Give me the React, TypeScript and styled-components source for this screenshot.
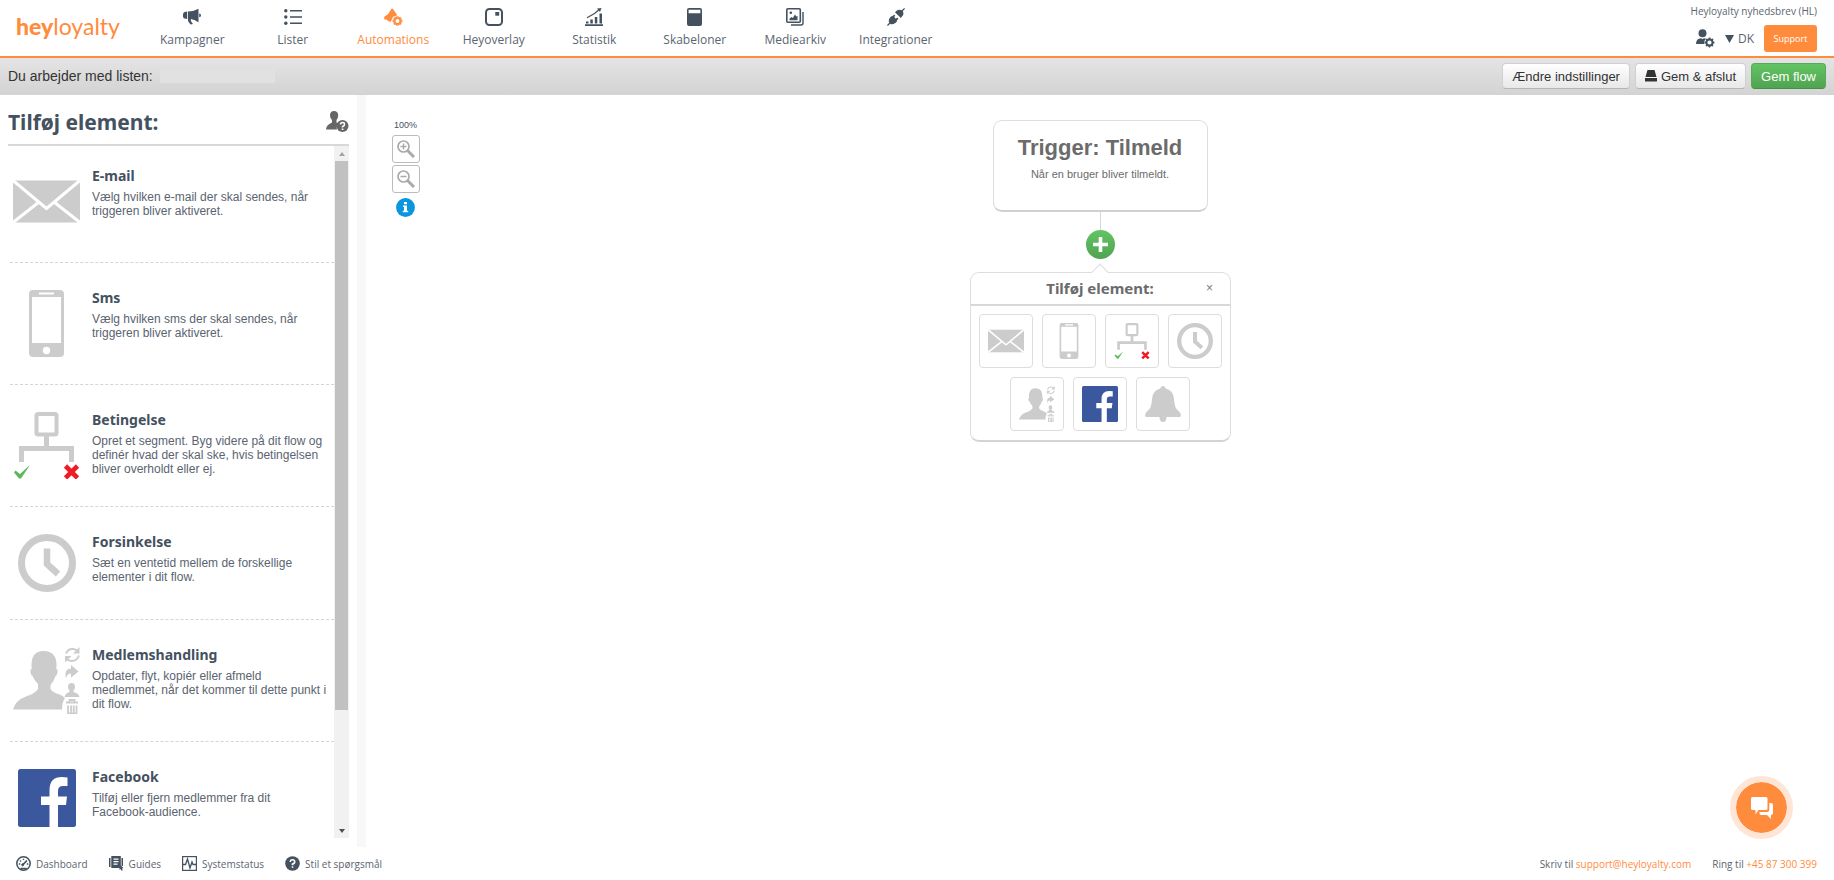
import React from "react";
import styled, { createGlobalStyle, css } from "styled-components";

const ORANGE = "#ff8b3d";
const SLATE = "#44515f";
const GREY = "#cccccc";
const UI = `"Open Sans", "Noto Sans", sans-serif`;
const HEADING = `"Noto Sans", "Open Sans", sans-serif`;
const BODY = `"Liberation Sans", Arial, sans-serif`;

const GlobalStyle = createGlobalStyle`
  *, *::before, *::after { box-sizing: border-box; }
  body { margin: 0; background: #fff; color: ${SLATE}; font-family: ${BODY}; }
  h1, h2, h3, p, ul { margin: 0; padding: 0; }
  ul { list-style: none; }
  a { color: inherit; text-decoration: none; }
  button { font-family: inherit; cursor: pointer; margin: 0; }
  svg { display: block; flex: none; }
`;

const Page = styled.div`
  height: 100vh;
  display: flex;
  flex-direction: column;
  overflow: hidden;
`;

const TopBar = styled.header`
  flex: none;
  height: 58px;
  display: flex;
  justify-content: space-between;
  padding: 0 17px 0 0;
  border-bottom: 2px solid ${ORANGE};
  font-family: ${UI};
`;

const TopLeft = styled.div`
  display: flex;
`;

const Logo = styled.a`
  width: 142px;
  padding: 9px 0 0 16px;
  font-family: Lato, sans-serif;
  font-size: 23px;
  line-height: 34px;
  color: ${ORANGE};
  b { font-weight: 900; }
`;

const Nav = styled.nav`
  width: 804px;
  display: grid;
  grid-template-columns: repeat(8, 1fr);
`;

const NavLink = styled.a<{ $active?: boolean }>`
  display: flex;
  flex-direction: column;
  align-items: center;
  gap: 5px;
  padding-top: 8px;
  font-size: 12px;
  line-height: 18px;
  color: ${(p) => (p.$active ? ORANGE : "#5b6570")};
  svg { color: ${(p) => (p.$active ? ORANGE : SLATE)}; }
`;

const Account = styled.div`
  display: flex;
  flex-direction: column;
  align-items: flex-end;
  gap: 6px;
  padding-top: 3px;
  color: #5b6570;
`;

const AccountName = styled.span`
  font-size: 10px;
  line-height: 16px;
`;

const AccountTools = styled.div`
  display: flex;
  align-items: center;
`;

const PlainButton = styled.button`
  display: flex;
  align-items: center;
  gap: 4px;
  border: 0;
  padding: 0;
  background: none;
  color: inherit;
  font-size: 12px;
  margin-right: 10px;
`;

const SupportButton = styled.button`
  width: 53px;
  height: 27px;
  padding: 0;
  border: 0;
  border-radius: 3px;
  background: ${ORANGE};
  color: #fff;
  font-size: 9px;
`;

const ListBar = styled.div`
  flex: none;
  height: 37px;
  display: flex;
  align-items: center;
  justify-content: space-between;
  padding: 0 8px 1px;
  background: linear-gradient(#e4e4e4, #d3d3d3);
  font-size: 14px;
  color: #333;
`;

const ListName = styled.div`
  display: flex;
  align-items: center;
  gap: 7px;
`;

const Redacted = styled.span`
  width: 115px;
  height: 13px;
  background: #e1e1e1;
`;

const Actions = styled.div`
  display: flex;
  gap: 5px;
`;

const ActionButton = styled.button<{ $primary?: boolean }>`
  display: flex;
  align-items: center;
  gap: 4px;
  height: 26px;
  padding: 0 9px;
  border: 1px solid #d0d0d0;
  border-bottom-color: #b5b5b5;
  border-radius: 4px;
  background: linear-gradient(#fff, #e8e8e8);
  color: #333;
  font-size: 13px;
  ${(p) =>
    p.$primary &&
    css`
      border-color: #56ab56;
      border-bottom-color: #449044;
      background: linear-gradient(#62c462, #51a351);
      color: #fff;
    `}
`;

const Workspace = styled.div`
  flex: 1;
  min-height: 0;
  display: flex;
`;

const Sidebar = styled.aside`
  flex: none;
  width: 366px;
  display: flex;
  flex-direction: column;
  padding: 0 9px 9px 8px;
  border-right: 9px solid #f8f8f8;
`;

const SidebarHead = styled.div`
  flex: none;
  height: 51px;
  width: 341px;
  display: flex;
  align-items: center;
  justify-content: space-between;
  padding-top: 4px;
  border-bottom: 2px solid #d8d8d8;
  h1 {
    font: 700 21px/28px ${HEADING};
  }
`;

const ScrollArea = styled.div`
  flex: 1;
  min-height: 0;
  width: 341px;
  display: flex;
`;

const ElementList = styled.ul`
  flex: 1;
  overflow: hidden;
  padding-left: 2px;
`;

const ElementItem = styled.li`
  display: flex;
  gap: 12px;
  padding: 27px 5px 27px 3px;
  border-bottom: 1px dashed #d5d5d5;
  &:first-child { padding-top: 22px; }
`;

const IconCell = styled.div`
  flex: none;
  width: 67px;
  display: flex;
  align-items: center;
  justify-content: center;
`;

const ElementText = styled.div`
  h2 {
    font: 700 14px/16px ${HEADING};
    padding-bottom: 6px;
  }
  p {
    font-size: 12px;
    line-height: 14px;
    color: #5a6470;
  }
`;

const ScrollBar = styled.div`
  width: 15px;
  display: flex;
  flex-direction: column;
  align-items: center;
  background: #f1f1f1;
`;

const ScrollArrow = styled.div<{ $down?: boolean }>`
  height: 15px;
  display: flex;
  align-items: center;
  &::before {
    content: "";
    border: 3px solid transparent;
    ${(p) =>
      p.$down
        ? "border-top: 4px solid #505050; border-bottom: 0;"
        : "border-bottom: 4px solid #a3a3a3; border-top: 0;"}
  }
`;

const ScrollTrack = styled.div`
  flex: 1;
  width: 13px;
`;

const ScrollThumb = styled.div`
  height: 83%;
  background: #c1c1c1;
`;

const Canvas = styled.main`
  flex: 1;
  display: grid;
  grid-template-columns: 1fr auto 1fr;
  align-items: start;
  padding: 0 25px;
`;

const ZoomTools = styled.div`
  width: 29px;
  display: flex;
  flex-direction: column;
  align-items: center;
  gap: 2px;
  padding-top: 23px;
  font-size: 9px;
  line-height: 15px;
`;

const ZoomButton = styled.button`
  width: 28px;
  height: 28px;
  display: flex;
  align-items: center;
  justify-content: center;
  padding: 0;
  border: 1px solid #bbb;
  border-radius: 3px;
  background: #fff;
`;

const InfoButton = styled.button`
  margin-top: 3px;
  padding: 0;
  border: 0;
  background: none;
`;

const Flow = styled.div`
  width: 261px;
  display: flex;
  flex-direction: column;
  align-items: center;
  padding-top: 25px;
  color: #6b6b6b;
`;

const TriggerCard = styled.section`
  width: 215px;
  height: 92px;
  padding-top: 12px;
  border: 1px solid #ddd;
  border-bottom: 2px solid #d0d0d0;
  border-radius: 9px;
  text-align: center;
  h2 {
    font-size: 22px;
    line-height: 30px;
  }
  p {
    padding-top: 3px;
    font-size: 11px;
    line-height: 16px;
  }
`;

const Connector = styled.div`
  width: 1px;
  height: 18px;
  background: #d8d8d8;
`;

const AddButton = styled.button`
  width: 29px;
  height: 29px;
  display: flex;
  align-items: center;
  justify-content: center;
  padding: 0;
  border: 0;
  border-radius: 50%;
  background: linear-gradient(#62c462, #51a351);
`;

const Picker = styled.section`
  position: relative;
  width: 100%;
  margin-top: 13px;
  border: 1px solid #ddd;
  border-bottom: 2px solid #d4d4d4;
  border-radius: 9px;
  &::before {
    content: "";
    position: absolute;
    top: -7px;
    left: calc(50% - 6px);
    width: 12px;
    height: 12px;
    transform: rotate(45deg);
    background: #fff;
    border: solid #ddd;
    border-width: 1px 0 0 1px;
  }
`;

const PickerHead = styled.div`
  display: grid;
  grid-template-columns: 28px 1fr 28px;
  align-items: center;
  height: 33px;
  padding: 0 6px 2px;
  border-bottom: 2px solid #d8d8d8;
  h3 {
    grid-column: 2;
    text-align: center;
    font: 700 15px/20px ${HEADING};
  }
`;

const CloseButton = styled.button`
  border: 0;
  padding: 0;
  background: none;
  color: #777;
  font-size: 12px;
`;

const Tiles = styled.div`
  display: flex;
  flex-wrap: wrap;
  justify-content: center;
  gap: 9px;
  padding: 8px 4px 9px;
`;

const Tile = styled.button`
  width: 54px;
  height: 54px;
  display: flex;
  align-items: center;
  justify-content: center;
  padding: 0;
  border: 1px solid #ddd;
  border-radius: 4px;
  background: #fff;
`;

const Footer = styled.footer`
  flex: none;
  height: 33px;
  display: flex;
  justify-content: space-between;
  align-items: center;
  padding: 0 17px 0 16px;
  font-family: ${UI};
  font-size: 10px;
  line-height: 16px;
  color: #5b6570;
`;

const FooterGroup = styled.div`
  display: flex;
  gap: 21px;
`;

const FooterLink = styled.a`
  display: flex;
  align-items: center;
  gap: 5px;
  svg { color: ${SLATE}; }
`;

const Contact = styled.span`
  a { color: ${ORANGE}; }
`;

const ChatButton = styled.button`
  position: fixed;
  right: 41px;
  bottom: 41px;
  width: 63px;
  height: 63px;
  display: flex;
  align-items: center;
  justify-content: center;
  padding: 0;
  border: 6px solid #ffe5d6;
  border-radius: 50%;
  background: ${ORANGE};
  background-clip: padding-box;
`;

type Size = { size: number };

const gearPath = (cx: number, cy: number, r: number) => {
  const pts: string[] = [];
  for (let i = 0; i < 24; i++) {
    const rad = i % 3 === 2 ? r * 0.74 : r;
    const a = ((i * 15 - 7) * Math.PI) / 180;
    pts.push(`${(cx + rad * Math.cos(a)).toFixed(2)} ${(cy + rad * Math.sin(a)).toFixed(2)}`);
  }
  return `M${pts.join("L")}Z`;
};

const Gear = ({ cx, cy, r }: { cx: number; cy: number; r: number }) => (
  <path
    fillRule="evenodd"
    fill="currentColor"
    d={`${gearPath(cx, cy, r)}M${cx - r * 0.42} ${cy}a${r * 0.42} ${r * 0.42} 0 1 0 ${r * 0.84} 0a${r * 0.42} ${r * 0.42} 0 1 0 ${-r * 0.84} 0Z`}
  />
);

const MegaphoneIcon = () => (
  <svg width="18" height="18" viewBox="0 0 18 18" fill="currentColor">
    <path d="M0 6.500Q0 4.500 1.500 4L4.200 3.500v7.500l-2.700-.5Q0 10 0 8.500ZM5 3.500Q11 3.500 15.500.8v13.400Q12 11.700 8 11q-1 1.500 2 5l-2.200.5Q4.500 13.500 5 11ZM16.200 5.500q1.800.3 1.800 1.900T16.200 9.300Z" />
  </svg>
);

const ListIcon = () => (
  <svg width="18" height="18" viewBox="0 0 18 18" fill="currentColor">
    <circle cx="1.800" cy="2.800" r="1.700" />
    <circle cx="1.800" cy="9" r="1.700" />
    <circle cx="1.800" cy="15.200" r="1.700" />
    <path d="M6 2h12v1.600H6zM6 8.200h12v1.600H6zM6 14.400h12V16H6z" />
  </svg>
);

const AutomationIcon = () => (
  <svg width="19" height="18" viewBox="0 0 19 18" fill="currentColor">
    <path d="M7.500.8Q8.500.2 9.200 1.200L13.600 7.800 8.800 9.200 8 11.300 6.800 14 3.500 12.800 3 11.500 1 11.800Q-.3 10.500.5 8.500L4 6.200Z" />
    <path d={gearPath(13.5, 13, 6)} fill="#fff" />
    <path d={gearPath(13.5, 13, 4.300)} fill="none" stroke="currentColor" strokeWidth="1.200" />
    <circle cx="13.500" cy="13" r="2.700" fill="none" stroke="currentColor" strokeWidth="1.500" />
  </svg>
);

const OverlayIcon = () => (
  <svg width="18" height="18" viewBox="0 0 18 18">
    <rect x="1" y="1" width="16" height="16" rx="3.500" fill="none" stroke="currentColor" strokeWidth="2" />
    <path fill="currentColor" d="M10.300 4h3.900v3.700h-3.900z" />
  </svg>
);

const StatsIcon = () => (
  <svg width="18" height="18" viewBox="0 0 18 18" fill="currentColor">
    <path d="M0 16.300h18V18H0zM1 13.500h2.500v2H1zM5.300 11.500h2.500v4H5.300zM9.800 9h2.500v6.500H9.800zM14.500 5.500H17v10h-2.500z" />
    <path d="M2 9.800 9.500 5.500 14 1.800" fill="none" stroke="currentColor" strokeWidth="1.300" />
    <path d="M12 .5 16.500 0 15 4Z" />
  </svg>
);

const TemplateIcon = () => (
  <svg width="15" height="18" viewBox="0 0 15 18" fill="currentColor">
    <path fillRule="evenodd" d="M2 0h11q2 0 2 2v14q0 2-2 2H2q-2 0-2-2V2Q0 0 2 0ZM1.600 1.800v3.400h11.800v-3.400Z" />
  </svg>
);

const MediaIcon = () => (
  <svg width="18" height="18" viewBox="0 0 18 18">
    <rect x=".8" y=".8" width="13.500" height="13.500" rx="1" fill="none" stroke="currentColor" strokeWidth="1.600" />
    <path d="M17 4v11q0 2-2 2H5" fill="none" stroke="currentColor" strokeWidth="1.400" />
    <circle cx="4.800" cy="4.800" r="1.300" fill="currentColor" />
    <path d="M3.500 12.200v-1.500l2-1.700 1.300 1L9 6.500l1.300 2 1.200-.7v4.400Z" fill="currentColor" />
  </svg>
);

const PlugIcon = () => (
  <svg width="18" height="18" viewBox="0 0 18 18" fill="currentColor">
    <path d="M17.200 0 18 .8 15.800 3.200Q17.500 6 15 8.600L13.800 9.900 8 4.200 9.300 3Q12 .7 14.800 2.300ZM7 6.500 8.300 7.700 7.200 9l1.700 1.700L10.200 9.500l1.300 1.300L10 12.300Q10.200 13.500 9 14.500 6 17.200 3.200 15.700L.9 18 0 17.100 2.300 14.800Q.8 12 3.500 9 4.800 7.900 5.700 8Z" />
  </svg>
);

const UserGearIcon = () => (
  <svg width="19" height="19" viewBox="0 0 19 19" color={SLATE}>
    <circle cx="6.500" cy="4.300" r="4" fill="currentColor" />
    <path d="M0 15q0-5.500 5-5.800l1.500.8L8 9.200l2 .6Q7.500 12 8.500 15Z" fill="currentColor" />
    <Gear cx={13.5} cy={13.5} r={5} />
  </svg>
);

const DriveIcon = () => (
  <svg width="12" height="12" viewBox="0 0 12 12" fill="#333">
    <path d="M2.500 0h7l2 7H.5ZM0 8h12v3.500H0Z" />
  </svg>
);

const UserHelpIcon = () => (
  <svg width="24" height="22" viewBox="0 0 24 22">
    <path fill="#666" d="M9 0q4.200 0 4.200 4.500 0 2.500-1.700 4.500v2.500l2 1q-2.500 2.500-1.500 6H1q0-4.500 6-7V9Q5 7 5 4.500 5 0 9 0Z" />
    <circle cx="17.500" cy="15" r="6" fill="#666" />
    <path d="M15.500 13.500q0-2 2-2t2 1.700-2 2.300v1" fill="none" stroke="#fff" strokeWidth="1.500" />
    <path d="M16.700 17.500h1.700V19h-1.700z" fill="#fff" />
  </svg>
);

const MailIcon = ({ size }: Size) => (
  <svg width={size} height={size} viewBox="0 0 67 67">
    <rect y="12.500" width="67" height="42" fill={GREY} />
    <path d="M0 12.500 33.500 40.500 67 12.500M0 54.500 26 34M67 54.500 41 34" fill="none" stroke="#fff" strokeWidth="3" />
  </svg>
);

const PhoneIcon = ({ size }: Size) => (
  <svg width={size} height={size} viewBox="0 0 67 67">
    <path
      fill={GREY}
      fillRule="evenodd"
      d="M20 0h27q4 0 4 4v59q0 4-4 4H20q-4 0-4-4V4q0-4 4-4ZM19 7v46h29V7ZM26 2.500v2h15v-2Z"
    />
    <circle cx="33.500" cy="60.500" r="3.700" fill="#fff" />
  </svg>
);

const BranchIcon = ({ size }: Size) => (
  <svg width={size} height={size} viewBox="0 0 67 67">
    <g fill="none" stroke={GREY}>
      <rect x="23.500" y="2" width="20" height="20.500" rx="1.500" strokeWidth="4" />
      <path d="M33.500 24v12M8.500 50V36.500h50V50" strokeWidth="5" />
    </g>
    <path d="M1 60.500 2.500 58.500 7 62 17 53 8 66.500H6Z" fill="#5cb85c" />
    <path d="M52.500 54 64.500 66M64.500 54 52.500 66" stroke="#ee1c25" strokeWidth="4.600" />
  </svg>
);

const ClockIcon = ({ size }: Size) => (
  <svg width={size} height={size} viewBox="0 0 58 58" fill="none" stroke={GREY}>
    <circle cx="29" cy="29" r="25.500" strokeWidth="7" />
    <path d="M29 14.500V30L40 40" strokeWidth="6.500" />
  </svg>
);

const MemberIcon = ({ size }: Size) => (
  <svg width={size} height={size} viewBox="0 0 67 67" fill={GREY}>
    <path d="M30.500 4q13 0 13 14 0 2-.3 4 2 0 1.300 3.500-.5 3-2 3.500-1.500 5-5 9v4q2.500 3.500 8 5 4 1.500 6.500 4-3 4-3 11.500H0q2-9 14-13.500 8-2.500 11-7V37q-4-4-5.500-8-1.500-.5-2-3.500-.5-3.500 1.200-3.500Q17 4 30.500 4Z" />
    <path d="M53 6.500Q55 1.500 60 2q3 .3 4.500 2M66 8.500Q64 14 58.500 14q-3-.3-5-2" fill="none" stroke={GREY} strokeWidth="2" />
    <path d="M66.500 0v6.500h-6.500ZM52 15.500V9h6.500ZM58 18l7.500 6.500-7.500 6v-4q-4 0-5 5-2.500-9.500 5-10ZM58.500 36q3.500 0 3.500 4 0 2-1.500 3.500v1.500q5 1 6 5H51.500q1-4 5-5v-1.500Q55 42 55 40q0-4 3.500-4Z" />
    <path d="M53 55.500h12M56.500 55v-2h5v2M55 58.500v8h8.500v-8M58 58.500v7M60.700 58.500v7" fill="none" stroke={GREY} strokeWidth="1.800" />
  </svg>
);

const FacebookIcon = ({ size }: Size) => (
  <svg width={size} height={size} viewBox="0 0 58 58">
    <rect width="58" height="58" rx="2.500" fill="#3b579d" />
    <path
      fill="#fff"
      d="M31.500 58V36H23v-8.500h8.500V21Q31.500 8 44 8q3 0 5.500.5V17H45q-5 0-5 5v5.500h9L48 36h-8v22Z"
    />
  </svg>
);

const BellIcon = ({ size }: Size) => (
  <svg width={size} height={size} viewBox="0 0 36 36" fill={GREY}>
    <path d="M18 0q2.500 0 2.700 2.500Q28.500 4.500 29 13q.3 9 4.500 12Q36 27 36 29.500q0 1.500-2 1.500H21.500q0 5-3.500 5t-3.500-5H2q-2 0-2-1.500Q0 27 2.500 25 6.700 22 7 13q.5-8.500 8.300-10.500Q15.500 0 18 0Z" />
  </svg>
);

const MagnifierIcon = ({ plus }: { plus?: boolean }) => (
  <svg width="18" height="18" viewBox="0 0 18 18" fill="none" stroke="#aaa">
    <circle cx="6.500" cy="6.500" r="5.500" strokeWidth="1.700" />
    <path d="M10.500 10.500 17 17" strokeWidth="3" />
    <path d={plus ? "M3.500 6.500h6M6.500 3.500v6" : "M3.500 6.500h6"} strokeWidth="1.500" />
  </svg>
);

const InfoIcon = () => (
  <svg width="19" height="19" viewBox="0 0 19 19">
    <circle cx="9.500" cy="9.500" r="9.400" fill="#0a96de" />
    <path fill="#fff" d="M8 4h3v2.300H8zM7 7.500h4v5.300h1.200v1.500H6.800v-1.500H8V9H7Z" />
  </svg>
);

const PlusIcon = () => (
  <svg width="15" height="15" viewBox="0 0 15 15">
    <path d="M7.500 0v15M0 7.500h15" stroke="#fff" strokeWidth="3.600" />
  </svg>
);

const GaugeIcon = () => (
  <svg width="15" height="15" viewBox="0 0 15 15" fill="none" stroke="currentColor">
    <circle cx="7.500" cy="7.500" r="6.700" strokeWidth="1.500" />
    <path d="M6.500 9 11 4.500" strokeWidth="1.700" />
    <circle cx="6.700" cy="8.800" r="1" fill="currentColor" />
    <path d="M4.500 12.500h6M2.800 8h1.500M4 4.500l1 1M7.500 2.700v1.400M10.800 8h1.500" strokeWidth="1.300" />
  </svg>
);

const GuideIcon = () => (
  <svg width="15" height="15" viewBox="0 0 15 15" fill="currentColor">
    <path d="M0 2h1.500v9H0zM12.500 2H14v8h-1.500z" />
    <path fillRule="evenodd" d="M2.300 0h9.500v9.500L14.500 12l-1.500.5.800 1.800-1.200.5-1-1.800-1.100 1V12H2.300ZM4.500 2.500v1.200h5V2.500ZM4.500 5v1.200h5V5ZM4.500 7.500v1.200h4V7.500Z" />
  </svg>
);

const PulseIcon = () => (
  <svg width="15" height="15" viewBox="0 0 15 15" fill="none" stroke="currentColor">
    <rect x=".6" y=".6" width="13.800" height="13.800" strokeWidth="1.200" />
    <path d="M1 8.500h2.500L5.500 3 8 12 10 6l1 2.500h3" strokeWidth="1.300" />
  </svg>
);

const QuestionIcon = () => (
  <svg width="15" height="15" viewBox="0 0 15 15">
    <circle cx="7.500" cy="7.500" r="7.300" fill="currentColor" />
    <path d="M5.300 6q0-2.200 2.200-2.200T9.700 5.700 7.500 8v1.200" fill="none" stroke="#fff" strokeWidth="1.600" />
    <path d="M6.700 10.300h1.600v1.500H6.700z" fill="#fff" />
  </svg>
);

const ChatIcon = () => (
  <svg width="22" height="22" viewBox="0 0 22 22" fill="#fff">
    <path d="M1.500 0H15q1.500 0 1.500 1.500v10Q16.500 13 15 13H7.500L4.500 17.500V13h-3Q0 13 0 11.500v-10Q0 0 1.500 0Z" />
    <path d="M18.300 6H20q2 0 2 2v8q0 2-2 2v4l-4-4h-6q-1.500 0-1.500-2v-1H16q2.300 0 2.300-2.500Z" />
  </svg>
);

const navItems = [
  { label: "Kampagner", icon: <MegaphoneIcon /> },
  { label: "Lister", icon: <ListIcon /> },
  { label: "Automations", icon: <AutomationIcon />, active: true },
  { label: "Heyoverlay", icon: <OverlayIcon /> },
  { label: "Statistik", icon: <StatsIcon /> },
  { label: "Skabeloner", icon: <TemplateIcon /> },
  { label: "Mediearkiv", icon: <MediaIcon /> },
  { label: "Integrationer", icon: <PlugIcon /> },
];

const elements = [
  { title: "E-mail", text: "Vælg hvilken e-mail der skal sendes, når triggeren bliver aktiveret.", icon: <MailIcon size={67} /> },
  { title: "Sms", text: "Vælg hvilken sms der skal sendes, når triggeren bliver aktiveret.", icon: <PhoneIcon size={67} /> },
  { title: "Betingelse", text: "Opret et segment. Byg videre på dit flow og definér hvad der skal ske, hvis betingelsen bliver overholdt eller ej.", icon: <BranchIcon size={67} /> },
  { title: "Forsinkelse", text: "Sæt en ventetid mellem de forskellige elementer i dit flow.", icon: <ClockIcon size={58} /> },
  { title: "Medlemshandling", text: "Opdater, flyt, kopiér eller afmeld medlemmet, når det kommer til dette punkt i dit flow.", icon: <MemberIcon size={67} /> },
  { title: "Facebook", text: "Tilføj eller fjern medlemmer fra dit Facebook-audience.", icon: <FacebookIcon size={58} /> },
];

const tiles = [
  { label: "E-mail", icon: <MailIcon size={36} /> },
  { label: "Sms", icon: <PhoneIcon size={36} /> },
  { label: "Betingelse", icon: <BranchIcon size={36} /> },
  { label: "Forsinkelse", icon: <ClockIcon size={36} /> },
  { label: "Medlemshandling", icon: <MemberIcon size={36} /> },
  { label: "Facebook", icon: <FacebookIcon size={36} /> },
  { label: "Notifikation", icon: <BellIcon size={36} /> },
];

const footerLinks = [
  { label: "Dashboard", icon: <GaugeIcon /> },
  { label: "Guides", icon: <GuideIcon /> },
  { label: "Systemstatus", icon: <PulseIcon /> },
  { label: "Stil et spørgsmål", icon: <QuestionIcon /> },
];

export default function App() {
  return (
    <Page>
      <GlobalStyle />
      <TopBar>
        <TopLeft>
          <Logo href="#"><b>hey</b>loyalty</Logo>
          <Nav>
            {navItems.map((n) => (
              <NavLink key={n.label} href="#" $active={n.active}>
                {n.icon}
                {n.label}
              </NavLink>
            ))}
          </Nav>
        </TopLeft>
        <Account>
          <AccountName>Heyloyalty nyhedsbrev (HL)</AccountName>
          <AccountTools>
            <PlainButton aria-label="Konto"><UserGearIcon /></PlainButton>
            <PlainButton>
              <svg width="9" height="8" viewBox="0 0 9 8" fill={SLATE}><path d="M0 0h9L4.500 8Z" /></svg>
              DK
            </PlainButton>
            <SupportButton>Support</SupportButton>
          </AccountTools>
        </Account>
      </TopBar>

      <ListBar>
        <ListName>
          Du arbejder med listen:
          <Redacted />
        </ListName>
        <Actions>
          <ActionButton>Ændre indstillinger</ActionButton>
          <ActionButton><DriveIcon />Gem &amp; afslut</ActionButton>
          <ActionButton $primary>Gem flow</ActionButton>
        </Actions>
      </ListBar>

      <Workspace>
        <Sidebar>
          <SidebarHead>
            <h1>Tilføj element:</h1>
            <UserHelpIcon />
          </SidebarHead>
          <ScrollArea>
            <ElementList>
              {elements.map((e) => (
                <ElementItem key={e.title}>
                  <IconCell>{e.icon}</IconCell>
                  <ElementText>
                    <h2>{e.title}</h2>
                    <p>{e.text}</p>
                  </ElementText>
                </ElementItem>
              ))}
            </ElementList>
            <ScrollBar>
              <ScrollArrow />
              <ScrollTrack><ScrollThumb /></ScrollTrack>
              <ScrollArrow $down />
            </ScrollBar>
          </ScrollArea>
        </Sidebar>

        <Canvas>
          <ZoomTools>
            100%
            <ZoomButton aria-label="Zoom ind"><MagnifierIcon plus /></ZoomButton>
            <ZoomButton aria-label="Zoom ud"><MagnifierIcon /></ZoomButton>
            <InfoButton aria-label="Info"><InfoIcon /></InfoButton>
          </ZoomTools>
          <Flow>
            <TriggerCard>
              <h2>Trigger: Tilmeld</h2>
              <p>Når en bruger bliver tilmeldt.</p>
            </TriggerCard>
            <Connector />
            <AddButton aria-label="Tilføj"><PlusIcon /></AddButton>
            <Picker>
              <PickerHead>
                <h3>Tilføj element:</h3>
                <CloseButton aria-label="Luk">×</CloseButton>
              </PickerHead>
              <Tiles>
                {tiles.map((t) => (
                  <Tile key={t.label} aria-label={t.label}>{t.icon}</Tile>
                ))}
              </Tiles>
            </Picker>
          </Flow>
        </Canvas>
      </Workspace>

      <Footer>
        <FooterGroup>
          {footerLinks.map((f) => (
            <FooterLink key={f.label} href="#">{f.icon}{f.label}</FooterLink>
          ))}
        </FooterGroup>
        <FooterGroup>
          <Contact>Skriv til <a href="mailto:support@heyloyalty.com">support@heyloyalty.com</a></Contact>
          <Contact>Ring til <a href="tel:+4587300399">+45 87 300 399</a></Contact>
        </FooterGroup>
      </Footer>
      <ChatButton aria-label="Chat"><ChatIcon /></ChatButton>
    </Page>
  );
}
